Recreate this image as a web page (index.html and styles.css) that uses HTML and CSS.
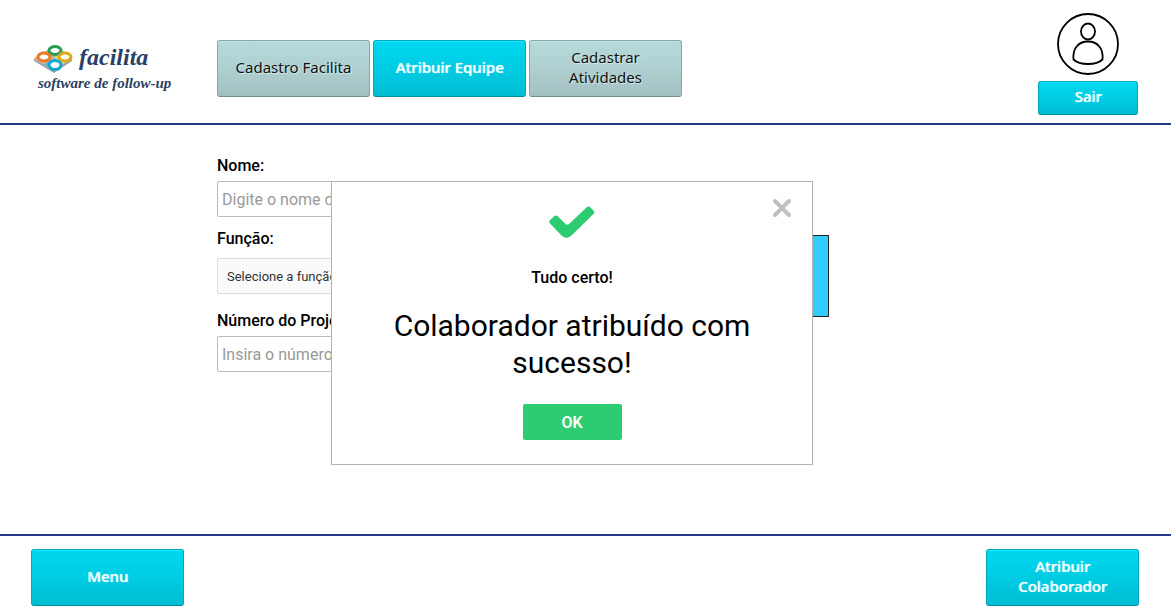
FILE: index.html
```html
<!DOCTYPE html>
<html lang="pt-BR">
<head>
<meta charset="utf-8">
<meta name="viewport" content="width=device-width, initial-scale=1">
<title>Facilita</title>
<link rel="stylesheet" href="styles.css">
</head>
<body>
<header class="topbar">
  <a class="logo" href="#" aria-label="facilita software de follow-up">
    <span class="logo-row">
      <svg class="logo-mark" width="40" height="28" viewBox="0 0 40 28" aria-hidden="true">
        <path d="M1 13 21 24v4L1 16zM21 24 39 13v3L21 28z" fill="#a3a6a8"/>
        <path d="M1 13 22 1 39 13 21 25z" fill="#f7e3b0"/>
        <path d="M11 7 22 1 31 7 21 13z" fill="#8ccc8c"/>
        <path d="M21 13 31 7 39 13 30 19z" fill="#ecd070"/>
        <path d="M11 19 21 13 30 19 21 25z" fill="#4fb9dc"/>
        <path d="M1 13 11 7 21 13 11 19z" fill="#f5ab70"/>
        <g fill="#fff" stroke-width="3">
          <ellipse cx="22" cy="5.500" rx="6" ry="4" stroke="#2b9d58"/>
          <ellipse cx="11" cy="12" rx="6" ry="4" stroke="#ef7622"/>
          <ellipse cx="32" cy="12" rx="6" ry="4" stroke="#dfaa17"/>
          <ellipse cx="22" cy="20" rx="6" ry="4.500" stroke="#16a5d5"/>
        </g>
      </svg>
      <span class="logo-name">facilita</span>
    </span>
    <span class="logo-tag">software de follow-up</span>
  </a>
  <nav class="tabs">
    <button class="btn btn-tab" type="button">Cadastro Facilita</button>
    <button class="btn btn-primary" type="button">Atribuir Equipe</button>
    <button class="btn btn-tab" type="button">Cadastrar Atividades</button>
  </nav>
  <div class="user">
    <svg class="avatar" width="62" height="62" viewBox="0 0 62 62" fill="none" stroke="#000" stroke-width="1.8" aria-hidden="true">
      <circle cx="31" cy="31" r="30"/>
      <ellipse cx="31" cy="18.5" rx="7" ry="8"/>
      <path d="M16.5 46.5C15.500 36 21 28.500 31 28.500S46.500 36 45.500 46.500C42 50 36 51 31 51S20 50 16.500 46.500z"/>
    </svg>
    <button class="btn btn-primary btn-small" type="button">Sair</button>
  </div>
</header>

<main class="content">
  <form class="form">
    <div class="fields">
      <label class="label" for="nome">Nome:</label>
      <input class="field" id="nome" type="text" placeholder="Digite o nome do colaborador">
      <label class="label label-select" for="funcao">Função:</label>
      <select class="field field-select" id="funcao"><option>Selecione a função</option></select>
      <label class="label label-project" for="projeto">Número do Projeto:</label>
      <input class="field" id="projeto" type="text" placeholder="Insira o número do projeto">
    </div>
    <div class="panel"></div>
  </form>

  <div class="overlay">
    <section class="modal" role="dialog" aria-labelledby="modal-title">
      <button class="close" type="button" aria-label="Fechar">
        <svg width="20" height="20" viewBox="0 0 20 20" stroke="#c0c0c0" stroke-width="4" stroke-linecap="round" aria-hidden="true"><path d="M3 3 17 17M17 3 3 17"/></svg>
      </button>
      <svg class="check" width="46" height="32" viewBox="0 0 46 32" fill="#2ecc71" aria-hidden="true">
        <path d="M1 14 5.500 10Q7 9 8.500 10L16.500 18Q18 19.500 20 18L38 1Q39.500 0 41 1L44.500 4.500Q46 6 44.500 8L23 29Q20 32 17.500 32Q15 32 12 29L1 17.500Q-.5 16 1 14z"/>
      </svg>
      <h2 class="modal-title" id="modal-title">Tudo certo!</h2>
      <p class="modal-text">Colaborador atribuído com sucesso!</p>
      <button class="ok" type="button">OK</button>
    </section>
  </div>
</main>

<footer class="bottombar">
  <button class="btn btn-primary" type="button">Menu</button>
  <button class="btn btn-primary" type="button">Atribuir Colaborador</button>
</footer>
</body>
</html>
```
FILE: styles.css
```css
* {
  box-sizing: border-box;
}

body {
  margin: 0;
  min-height: 100vh;
  display: flex;
  flex-direction: column;
  background: #fff;
  color: #000;
  font-family: Roboto, sans-serif;
  font-size: 16px;
}

.topbar {
  display: flex;
  align-items: flex-start;
  padding: 13px 33px 8px;
  border-bottom: 2px solid #24388a;
}

.logo {
  flex: none;
  width: 184px;
  padding-top: 28px;
  color: #2a4163;
  font-family: "Liberation Serif", serif;
  font-style: italic;
  font-weight: 700;
  text-decoration: none;
}

.logo-row {
  display: flex;
  align-items: center;
  gap: 6px;
}

.logo-mark {
  margin-top: 4px;
}

.logo-name {
  font-size: 24px;
  line-height: 32px;
}

.logo-tag {
  display: block;
  padding-left: 5px;
  font-size: 15px;
  line-height: 20px;
}

.tabs {
  display: flex;
  gap: 3px;
  padding-top: 27px;
}

.btn {
  width: 153px;
  height: 57px;
  padding: 0 16px 4px;
  border: 1px solid;
  border-radius: 3px;
  font-family: "Noto Sans", sans-serif;
  font-size: 15px;
  line-height: 20px;
}

.btn-tab {
  border-color: #83a9a8 #83a9a8 #758d8e;
  background: linear-gradient(#b5dada, #afd0d0 50%, #a3c0c1);
  box-shadow: inset 0 1px #c2e5e5;
  color: #111;
  text-shadow: 1px 1px 1px #d7eeee;
}

.btn-primary {
  border-color: #00a8ba #00a8ba #008e9d;
  background: linear-gradient(#00d8f0, #00cce3 50%, #00bdd3);
  box-shadow: inset 0 1px #1ce7fb;
  color: #fff;
  font-weight: 500;
  text-shadow: 1px 0 1px #a9f4fc;
}

.btn-small {
  width: 100px;
  height: 34px;
}

.user {
  display: flex;
  flex-direction: column;
  align-items: center;
  gap: 6px;
  margin-left: auto;
}

.content {
  position: relative;
  flex: 1;
  padding: 30px 217px;
}

.form {
  display: flex;
  align-items: flex-start;
  justify-content: space-between;
  max-width: 612px;
}

.fields {
  display: flex;
  flex-direction: column;
  width: 400px;
}

.label {
  padding-bottom: 5px;
  font-weight: 500;
  line-height: 21px;
}

.label-select {
  padding: 11px 0 9px;
}

.label-project {
  padding-top: 16px;
}

.field {
  height: 36px;
  padding: 0 4px;
  border: 1px solid #bbb;
  border-radius: 2px;
  background: #fff;
  font-family: Roboto, sans-serif;
  font-size: 16px;
}

.field::placeholder {
  color: #999;
}

.field-select {
  appearance: none;
  padding: 0 9px;
  border: 1px solid #ddd;
  background: #fafafa;
  color: #333;
  font-size: 13px;
}

.panel {
  width: 100px;
  height: 82px;
  margin-top: 80px;
  border: 1px solid #222;
  background: #3cf;
}

.overlay {
  position: absolute;
  inset: 0 27px 0 0;
  display: flex;
  align-items: flex-start;
  justify-content: center;
  padding-top: 56px;
}

.modal {
  position: relative;
  display: flex;
  flex-direction: column;
  align-items: center;
  width: 482px;
  padding: 24px 40px;
  border: 1px solid #b5b3b0;
  background: #fff;
  text-align: center;
}

.close {
  position: absolute;
  top: 16px;
  right: 20px;
  display: flex;
  padding: 0;
  border: 0;
  background: none;
}

.modal-title {
  margin: 29px 0 19px;
  font-size: 16px;
  font-weight: 500;
  line-height: 21px;
}

.modal-text {
  margin: 0 0 23px;
  font-size: 30px;
  font-weight: 400;
  line-height: 37px;
}

.ok {
  width: 99px;
  height: 36px;
  border: 0;
  border-radius: 2px;
  background: #2ecc71;
  color: #fff;
  font-family: Roboto, sans-serif;
  font-size: 16px;
  font-weight: 600;
}

.bottombar {
  display: flex;
  justify-content: space-between;
  padding: 13px 32px 3px 31px;
  border-top: 2px solid #24388a;
}
```
